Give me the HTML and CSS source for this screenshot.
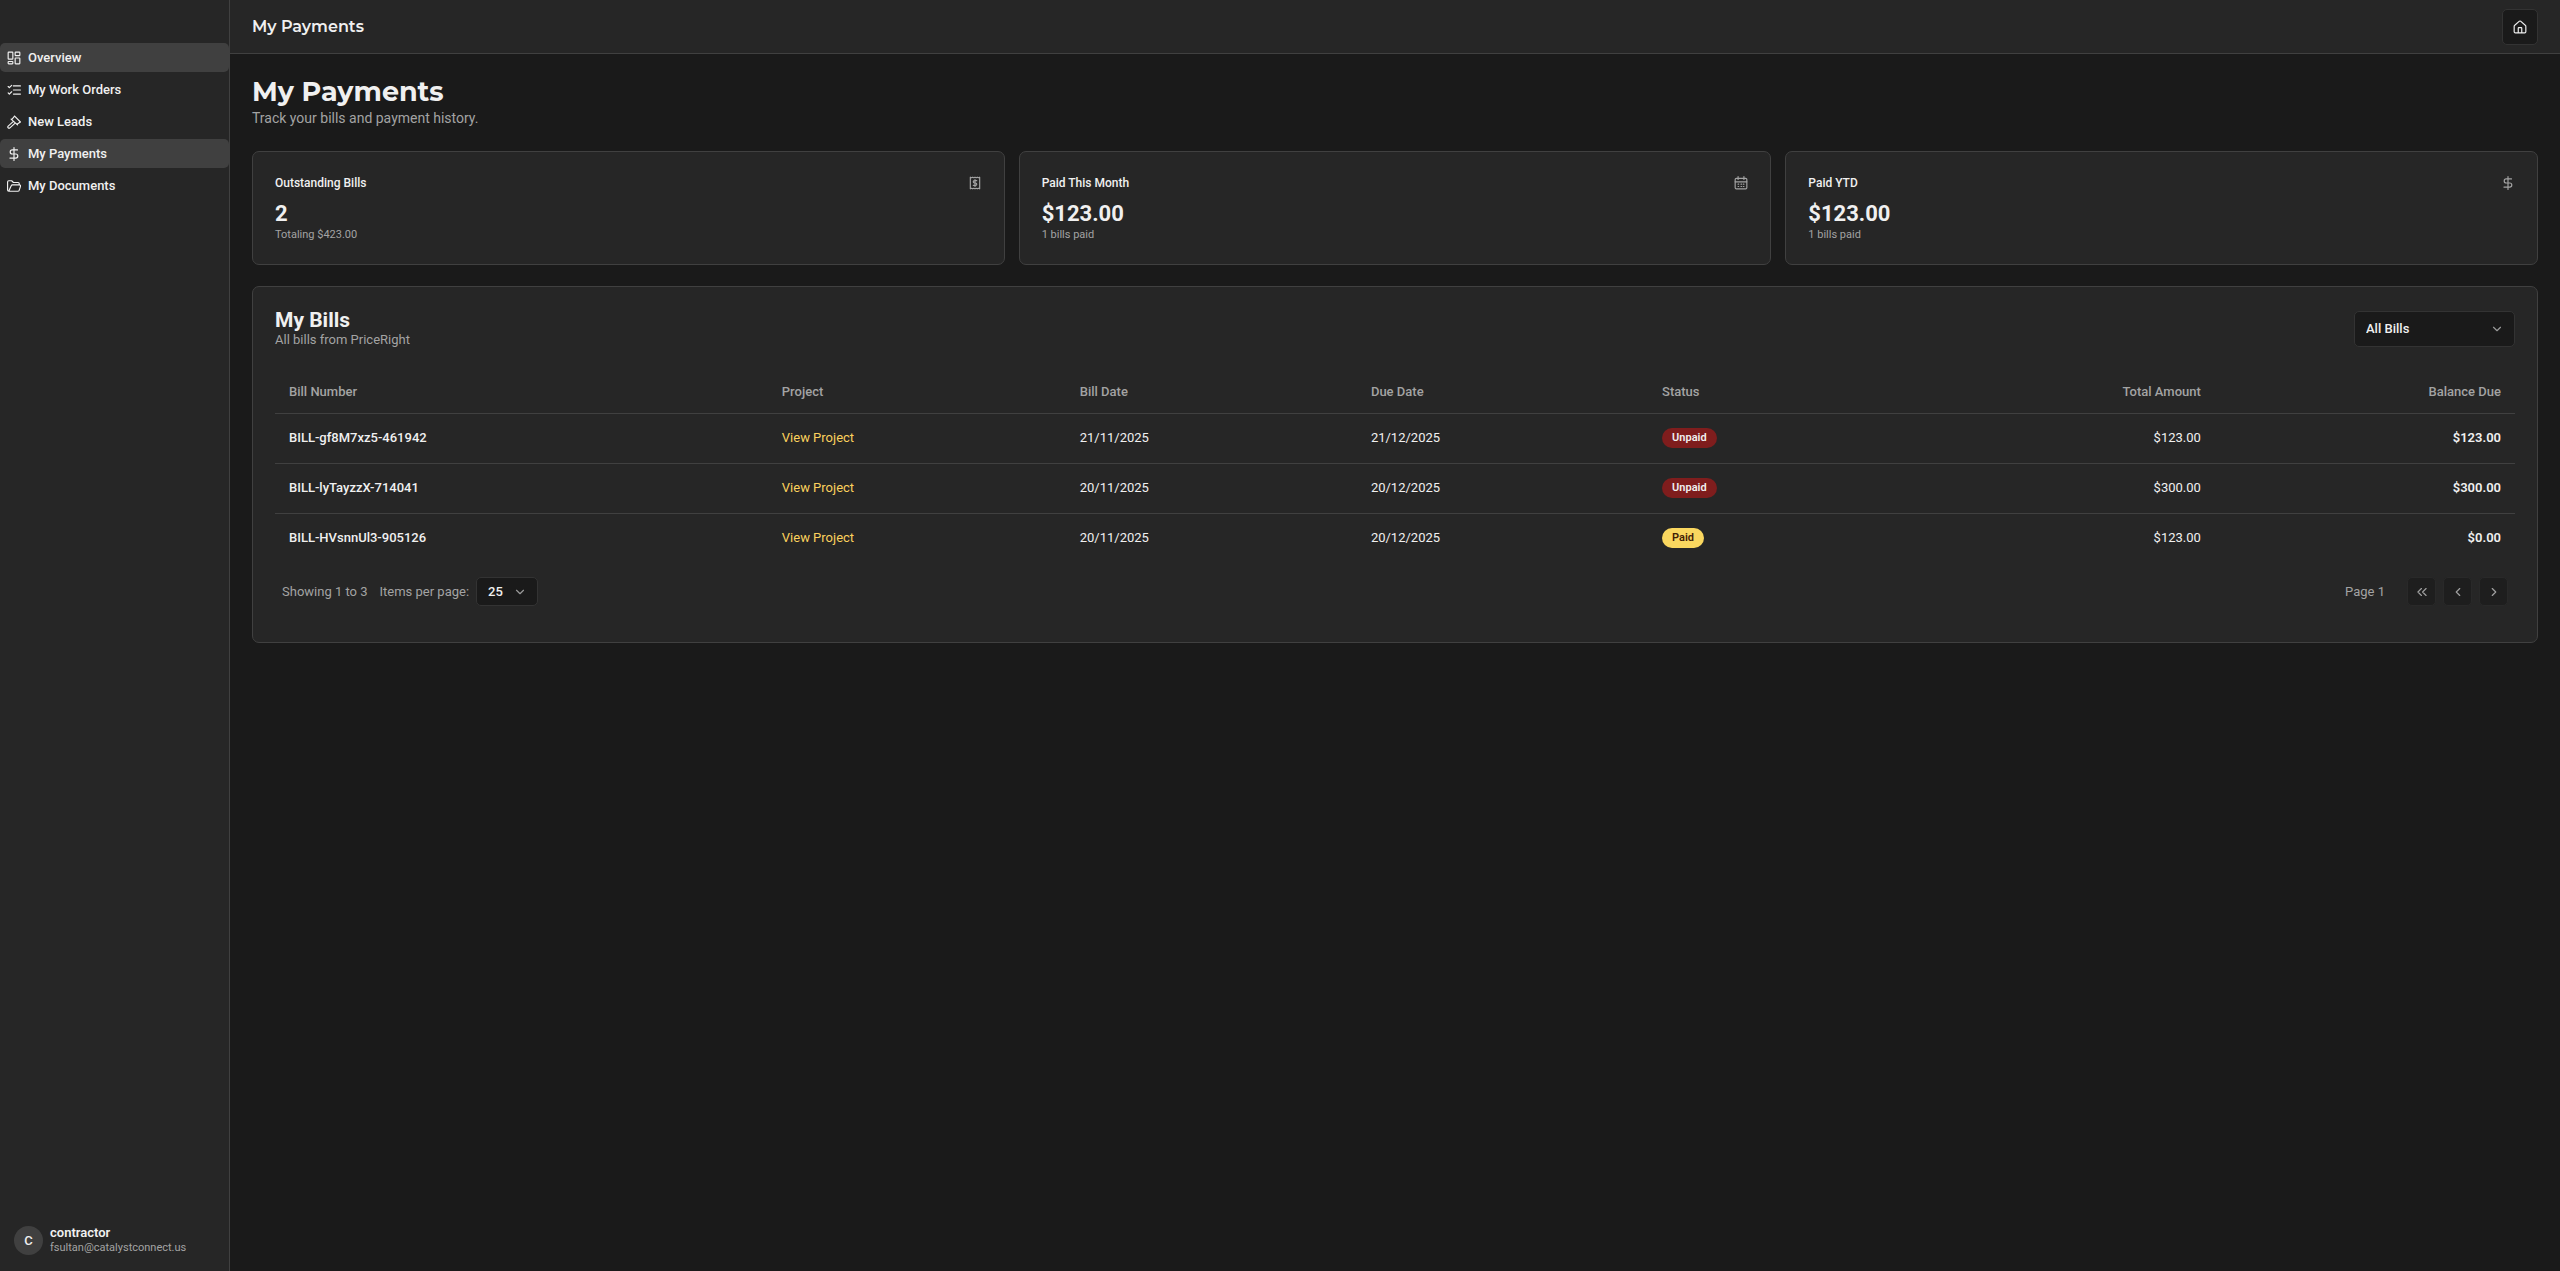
FILE: index.html
```
<!DOCTYPE html>
<html lang="en">
<head>
<meta charset="utf-8">
<title>My Payments</title>
<link rel="stylesheet" href="styles.css">
</head>
<body>
<div class="app">

    <aside class="sidebar">
        <nav class="menu">
            <a class="active" href="#overview">
                <svg class="icon" viewBox="0 0 24 24"><rect x="2" y="2" width="8" height="12" rx="1"/><rect x="14" y="2" width="8" height="6" rx="1"/><rect x="14" y="12" width="8" height="10" rx="1"/><rect x="2" y="18" width="8" height="4" rx="1"/></svg>
                <span>Overview</span>
            </a>
            <a href="#work-orders">
                <svg class="icon" viewBox="0 0 24 24"><path d="M11 5h12M11 12h12M11 19h12M2 6l2 2 4-4M2 17l2 2 4-4"/></svg>
                <span>My Work Orders</span>
            </a>
            <a href="#leads">
                <svg class="icon" viewBox="0 0 24 24"><path d="M13 2l10 10M8 8l5-6M17 16l6-4M7 7l11 10M11 11l-9 8a2 2 0 0 0 3 3l9-8"/></svg>
                <span>New Leads</span>
            </a>
            <a class="active" href="#payments">
                <svg class="icon" viewBox="0 0 24 24"><path d="M12 1v22M18 5H9a3 3 0 0 0 0 7h6a3 3 0 0 1 0 7H5"/></svg>
                <span>My Payments</span>
            </a>
            <a href="#documents">
                <svg class="icon" viewBox="0 0 24 24"><path d="M3 21a2 2 0 0 1-2-2V5a2 2 0 0 1 2-2h5l3 3h8a2 2 0 0 1 2 2v2M3 21l4-9a3 3 0 0 1 2-2h12a2 2 0 0 1 2 3l-2 6a2 2 0 0 1-2 2z"/></svg>
                <span>My Documents</span>
            </a>
        </nav>
        <div class="user">
            <span class="avatar">C</span>
            <div>
                <div class="user-name">contractor</div>
                <div class="user-mail">fsultan@catalystconnect.us</div>
            </div>
        </div>
    </aside>

    <div class="page">
        <header class="topbar">
            <h2>My Payments</h2>
            <button class="home" type="button" aria-label="Home">
                <svg class="icon" viewBox="0 0 24 24"><path d="M2 11a2 2 0 0 1 1-2l8-7a2 2 0 0 1 2 0l8 7a2 2 0 0 1 1 2v9a2 2 0 0 1-2 2H4a2 2 0 0 1-2-2zM9 22v-8a1 1 0 0 1 1-1h4a1 1 0 0 1 1 1v8"/></svg>
            </button>
        </header>

        <main>
            <h1>My Payments</h1>
            <p class="lead">Track your bills and payment history.</p>

            <div class="stats">
                <section class="card">
                    <div class="stat-head">
                        <h3>Outstanding Bills</h3>
                        <svg class="icon" viewBox="0 0 24 24"><path d="M4 2l2 1 2-1 2 1 2-1 2 1 2-1 2 1 2-1v20l-2-1-2 1-2-1-2 1-2-1-2 1-2-1-2 1zM12 6v12M15 8h-4a2 2 0 0 0 0 4h2a2 2 0 0 1 0 4H9"/></svg>
                    </div>
                    <div class="amount">2</div>
                    <p class="note">Totaling $423.00</p>
                </section>
                <section class="card">
                    <div class="stat-head">
                        <h3>Paid This Month</h3>
                        <svg class="icon" viewBox="0 0 24 24"><rect x="2" y="4" width="20" height="18" rx="2"/><path d="M7 1v5M17 1v5M2 10h20M7 14h1M12 14h1M16 14h1M7 18h1M12 18h1M16 18h1"/></svg>
                    </div>
                    <div class="amount">$123.00</div>
                    <p class="note">1 bills paid</p>
                </section>
                <section class="card">
                    <div class="stat-head">
                        <h3>Paid YTD</h3>
                        <svg class="icon" viewBox="0 0 24 24"><path d="M12 1v22M18 5H9a3 3 0 0 0 0 7h6a3 3 0 0 1 0 7H5"/></svg>
                    </div>
                    <div class="amount">$123.00</div>
                    <p class="note">1 bills paid</p>
                </section>
            </div>

            <section class="card bills">
                <div class="bills-head">
                    <div>
                        <h2>My Bills</h2>
                        <p>All bills from PriceRight</p>
                    </div>
                    <select class="filter" aria-label="Filter bills">
                        <option>All Bills</option>
                        <option>Unpaid</option>
                        <option>Paid</option>
                    </select>
                </div>

                <table>
                    <colgroup>
                        <col class="c-number"><col class="c-project"><col class="c-date"><col class="c-date"><col class="c-status"><col><col class="c-balance">
                    </colgroup>
                    <thead>
                        <tr>
                            <th>Bill Number</th>
                            <th>Project</th>
                            <th>Bill Date</th>
                            <th>Due Date</th>
                            <th>Status</th>
                            <th class="num">Total Amount</th>
                            <th class="num">Balance Due</th>
                        </tr>
                    </thead>
                    <tbody>
                        <tr>
                            <td class="strong">BILL-gf8M7xz5-461942</td>
                            <td><a href="#project">View Project</a></td>
                            <td>21/11/2025</td>
                            <td>21/12/2025</td>
                            <td><span class="badge unpaid">Unpaid</span></td>
                            <td class="num">$123.00</td>
                            <td class="num bold">$123.00</td>
                        </tr>
                        <tr>
                            <td class="strong">BILL-lyTayzzX-714041</td>
                            <td><a href="#project">View Project</a></td>
                            <td>20/11/2025</td>
                            <td>20/12/2025</td>
                            <td><span class="badge unpaid">Unpaid</span></td>
                            <td class="num">$300.00</td>
                            <td class="num bold">$300.00</td>
                        </tr>
                        <tr>
                            <td class="strong">BILL-HVsnnUl3-905126</td>
                            <td><a href="#project">View Project</a></td>
                            <td>20/11/2025</td>
                            <td>20/12/2025</td>
                            <td><span class="badge paid">Paid</span></td>
                            <td class="num">$123.00</td>
                            <td class="num bold">$0.00</td>
                        </tr>
                    </tbody>
                </table>

                <div class="pager">
                    <span>Showing 1 to 3</span>
                    <label for="per-page">Items per page:</label>
                    <select class="per-page" id="per-page">
                        <option>25</option>
                        <option>50</option>
                        <option>100</option>
                    </select>
                    <span class="page-no">Page 1</span>
                    <div class="pager-buttons">
                        <button type="button" disabled aria-label="First page"><svg class="icon" viewBox="0 0 24 24"><path d="M11 18l-6-6 6-6M19 18l-6-6 6-6"/></svg></button>
                        <button type="button" disabled aria-label="Previous page"><svg class="icon" viewBox="0 0 24 24"><path d="M15 18l-6-6 6-6"/></svg></button>
                        <button type="button" disabled aria-label="Next page"><svg class="icon" viewBox="0 0 24 24"><path d="M9 18l6-6-6-6"/></svg></button>
                    </div>
                </div>
            </section>
        </main>
    </div>

</div>
</body>
</html>
```
FILE: styles.css
```
*
{
    box-sizing: border-box;
}

body
{
    margin: 0;
    background: #1a1a1a;
    color: #f0f0f0;
    font: 13px/18px Roboto, "Liberation Sans", sans-serif;
}

h1, h2, h3, p
{
    margin: 0;
}

.icon
{
    width: 14px;
    height: 14px;
    flex: none;
    fill: none;
    stroke: currentColor;
    stroke-width: 2;
    stroke-linecap: round;
    stroke-linejoin: round;
}

.app
{
    display: flex;
    min-height: 100vh;
}

/* sidebar */

.sidebar
{
    width: 230px;
    flex: none;
    display: flex;
    flex-direction: column;
    justify-content: space-between;
    padding-top: 43px;
    background: #262626;
    border-right: 1px solid #404040;
}

.menu
{
    display: flex;
    flex-direction: column;
    gap: 3px;
}

.menu a
{
    display: flex;
    align-items: center;
    gap: 7px;
    height: 29px;
    padding: 0 7px;
    border-radius: 5px;
    color: #f0f0f0;
    font-weight: 500;
    text-decoration: none;
}

.menu a.active
{
    background: #404040;
}

.user
{
    display: flex;
    align-items: center;
    gap: 7px;
    padding: 14px 14px 16px;
}

.avatar
{
    width: 29px;
    height: 29px;
    border-radius: 50%;
    background: #404040;
    font-weight: 500;
    line-height: 29px;
    text-align: center;
}

.user-name
{
    font-weight: 600;
    line-height: 16px;
}

.user-mail
{
    color: #a3a3a3;
    font-size: 11px;
    line-height: 14px;
}

/* header */

.page
{
    flex: 1;
    min-width: 0;
}

.topbar
{
    display: flex;
    align-items: center;
    justify-content: space-between;
    height: 54px;
    padding: 0 22px;
    background: #262626;
    border-bottom: 1px solid #404040;
}

.topbar h2
{
    font: 600 16px/24px Montserrat, "Noto Sans", sans-serif;
}

.home
{
    display: flex;
    align-items: center;
    justify-content: center;
    width: 36px;
    height: 36px;
    padding: 0;
    background: #1a1a1a;
    border: 1px solid #333;
    border-radius: 5px;
    color: #f0f0f0;
}

main
{
    padding: 22px;
}

h1
{
    font: 700 27px/32px Montserrat, "Noto Sans", sans-serif;
}

.lead
{
    color: #a3a3a3;
    font-size: 14px;
    line-height: 20px;
}

.card
{
    padding: 22px;
    background: #262626;
    border: 1px solid #404040;
    border-radius: 7px;
}

/* summary cards */

.stats
{
    display: grid;
    grid-template-columns: repeat(3, 1fr);
    gap: 14px;
    margin: 23px 0 21px;
}

.stat-head
{
    display: flex;
    align-items: center;
    justify-content: space-between;
    margin-bottom: 7px;
    color: #a3a3a3;
}

.stat-head h3
{
    color: #f0f0f0;
    font-size: 12px;
    font-weight: 500;
}

.amount
{
    font-size: 22px;
    font-weight: 700;
    line-height: 29px;
}

.note
{
    color: #a3a3a3;
    font-size: 11px;
    line-height: 14px;
}

/* bills */

.bills-head
{
    display: flex;
    align-items: center;
    justify-content: space-between;
    color: #a3a3a3;
}

.bills-head h2
{
    color: #f0f0f0;
    font-size: 21px;
    font-weight: 700;
    line-height: 22px;
}

select
{
    appearance: none;
    border: 1px solid #333;
    border-radius: 5px;
    background: #1a1a1a url("data:image/svg+xml,%3Csvg xmlns='http://www.w3.org/2000/svg' viewBox='0 0 24 24' fill='none' stroke='%23999' stroke-width='2' stroke-linecap='round' stroke-linejoin='round'%3E%3Cpath d='M6 9l6 6 6-6'/%3E%3C/svg%3E") no-repeat right 10px center / 14px 14px;
    color: #f0f0f0;
    font: inherit;
    font-weight: 500;
}

.filter
{
    width: 161px;
    height: 36px;
    padding: 0 11px;
}

table
{
    width: 100%;
    margin-top: 20px;
    border-collapse: collapse;
    table-layout: fixed;
}

.c-number
{
    width: 22%;
}

.c-project
{
    width: 13.3%;
}

.c-date, .c-status
{
    width: 13%;
}

.c-balance
{
    width: 13.4%;
}

th, td
{
    height: 50px;
    padding: 0 14px;
    text-align: left;
}

th
{
    height: 44px;
    padding-top: 2px;
    color: #a3a3a3;
    font-weight: 500;
}

tr
{
    border-bottom: 1px solid #404040;
}

tbody tr:last-child
{
    border-bottom: 0;
}

td a
{
    color: #fbd15d;
    text-decoration: none;
}

.num
{
    text-align: right;
}

.strong
{
    font-weight: 500;
}

.bold
{
    font-weight: 600;
}

.badge
{
    display: inline-block;
    padding: 3px 10px;
    border-radius: 10px;
    font-size: 11px;
    font-weight: 600;
    line-height: 14px;
}

.unpaid
{
    background: #7f1d1d;
}

.paid
{
    background: #fad75f;
    color: #422006;
}

.pager
{
    display: flex;
    align-items: center;
    padding: 14px 7px;
    color: #a3a3a3;
}

.pager label
{
    margin: 0 7px 0 12px;
}

.per-page
{
    width: 62px;
    height: 29px;
    padding: 0 11px;
}

.page-no
{
    margin-left: auto;
}

.pager-buttons
{
    display: flex;
    gap: 7px;
    margin-left: 22px;
}

.pager-buttons button
{
    display: flex;
    align-items: center;
    justify-content: center;
    width: 29px;
    height: 29px;
    padding: 0;
    background: #1a1a1a;
    border: 1px solid #2c2c2c;
    border-radius: 5px;
    color: #f0f0f0;
    opacity: .6;
}
```
